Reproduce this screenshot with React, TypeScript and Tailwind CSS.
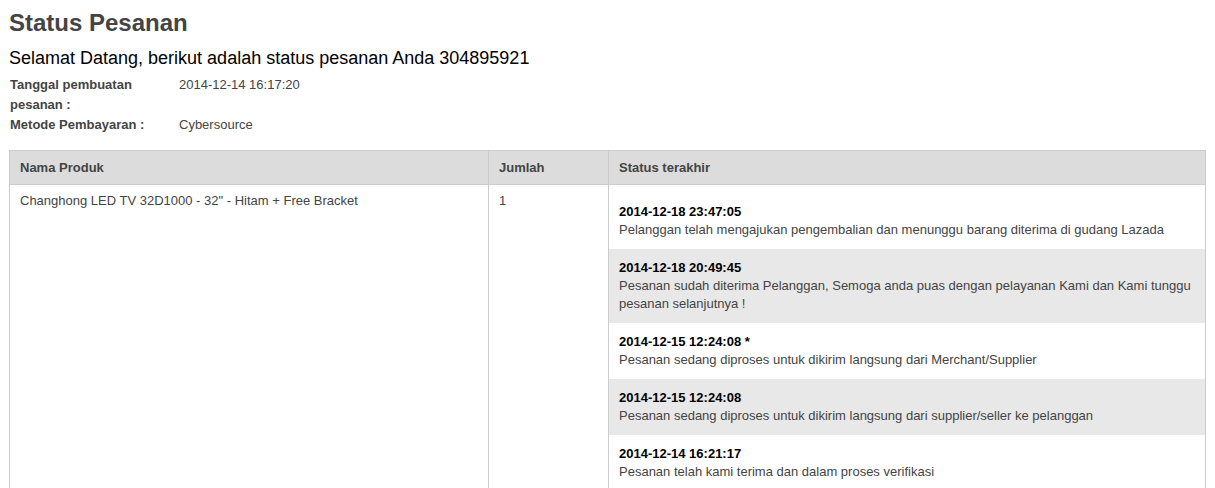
export default function App() {
  const rows = [
    ["2014-12-18 23:47:05", "Pelanggan telah mengajukan pengembalian dan menunggu barang diterima di gudang Lazada"],
    ["2014-12-18 20:49:45", "Pesanan sudah diterima Pelanggan, Semoga anda puas dengan pelayanan Kami dan Kami tunggu pesanan selanjutnya !"],
    ["2014-12-15 12:24:08 *", "Pesanan sedang diproses untuk dikirim langsung dari Merchant/Supplier"],
    ["2014-12-15 12:24:08", "Pesanan sedang diproses untuk dikirim langsung dari supplier/seller ke pelanggan"],
    ["2014-12-14 16:21:17", "Pesanan telah kami terima dan dalam proses verifikasi"],
  ];
  return (
    <div className="bg-white text-[#444] px-[9px] pt-[8px] h-[488px] overflow-hidden" style={{ fontFamily: '"Liberation Sans", Arial, sans-serif' }}>
      <h1 className="text-[24px] font-bold leading-[30px] text-[#444]">Status Pesanan</h1>
      <h2 className="text-[18px] leading-[24px] text-black mt-[8px]">Selamat Datang, berikut adalah status pesanan Anda 304895921</h2>
      <div className="text-[13px] leading-[20px] mt-[5px]">
        <div className="flex">
          <div className="w-[170px] font-bold pl-[1px]">Tanggal pembuatan<br />pesanan :</div>
          <div>2014-12-14 16:17:20</div>
        </div>
        <div className="flex">
          <div className="w-[170px] font-bold pl-[1px]">Metode Pembayaran :</div>
          <div>Cybersource</div>
        </div>
      </div>
      <div className="mt-[15px] border border-[#ccc] text-[13px]">
        <div className="flex bg-[#dcdcdc] font-bold h-[34px] items-center border-b border-[#ccc]">
          <div className="w-[479px] px-[10px] h-full flex items-center border-r border-[#ccc]">Nama Produk</div>
          <div className="w-[120px] px-[10px] h-full flex items-center border-r border-[#ccc]">Jumlah</div>
          <div className="flex-1 px-[10px]">Status terakhir</div>
        </div>
        <div className="flex">
          <div className="w-[479px] px-[10px] pt-[6px] border-r border-[#ccc]">Changhong LED TV 32D1000 - 32" - Hitam + Free Bracket</div>
          <div className="w-[120px] px-[10px] pt-[6px] border-r border-[#ccc]">1</div>
          <div className="flex-1 pt-[8px]">
            {rows.map(([d, t], i) => (
              <div key={i} className={`px-[10px] pt-[10px] pb-[10px] leading-[18px] ${i % 2 === 1 ? "bg-[#e8e8e8]" : ""}`}>
                <div className="font-bold text-black">{d}</div>
                <div>{t}</div>
              </div>
            ))}
          </div>
        </div>
      </div>
    </div>
  );
}
